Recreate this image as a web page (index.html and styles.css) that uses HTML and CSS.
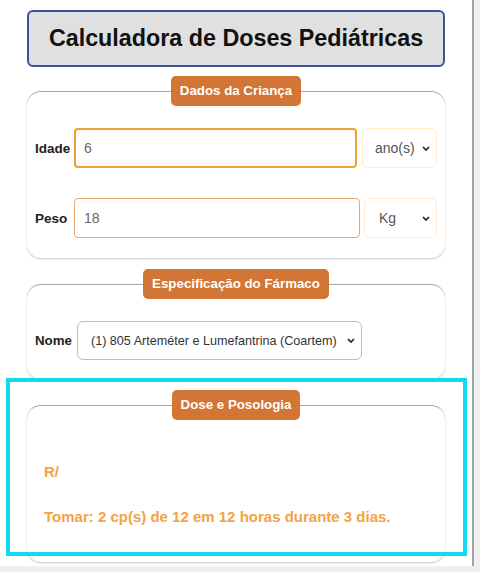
FILE: index.html
```html
<!DOCTYPE html>
<html lang="pt">
<head>
<meta charset="utf-8">
<title>Calculadora de Doses Pediátricas</title>
<link rel="stylesheet" href="styles.css">
</head>
<body>
<div class="page">
  <header class="title-box"><h1>Calculadora de Doses Pediátricas</h1></header>

  <section class="group">
    <div class="group-head"><span class="legend">Dados da Criança</span></div>
    <div class="group-body body-child">
      <div class="row">
        <label class="lbl">Idade</label>
        <input class="field field-focus" type="text" value="6">
        <select class="sel unit unit-age"><option>ano(s)</option></select>
      </div>
      <div class="row">
        <label class="lbl">Peso</label>
        <input class="field" type="text" value="18">
        <select class="sel unit unit-kg"><option>Kg</option></select>
      </div>
    </div>
  </section>

  <section class="group">
    <div class="group-head"><span class="legend">Especificação do Fármaco</span></div>
    <div class="group-body body-drug">
      <div class="row">
        <label class="lbl-auto">Nome</label>
        <select class="sel drug"><option>(1) 805 Arteméter e Lumefantrina (Coartem)</option></select>
      </div>
    </div>
  </section>

  <section class="group">
    <div class="group-head"><span class="legend">Dose e Posologia</span></div>
    <div class="group-body body-dose">
      <p class="rx">R/</p>
      <p class="rx">Tomar: 2 cp(s) de 12 em 12 horas durante 3 dias.</p>
    </div>
  </section>

  <div class="highlight"></div>
</div>
</body>
</html>
```

FILE: styles.css
```css
html, body {
  margin: 0;
  padding: 0;
}
body {
  background: #f0f0f0;
  font-family: "Liberation Sans", Arial, sans-serif;
  width: 480px;
  height: 572px;
  overflow: hidden;
}
.page {
  position: relative;
  box-sizing: border-box;
  width: 474px;
  height: 566px;
  background: #fff;
  border-right: 2px solid #a4a4a4;
  padding: 10px 27px 0 27px;
  overflow: hidden;
}
.title-box {
  box-sizing: border-box;
  height: 57px;
  background: #e0e0e0;
  border: 2px solid #3d4f9f;
  border-radius: 6px;
  display: flex;
  align-items: center;
  justify-content: center;
}
.title-box h1 {
  margin: 0;
  font-size: 23.3px;
  font-weight: bold;
  color: #111;
}
.group {
  margin-top: 9px;
}
.group + .group {
  margin-top: 11px;
}
.group-head {
  display: flex;
  justify-content: center;
  position: relative;
  z-index: 1;
}
.legend {
  display: block;
  box-sizing: border-box;
  height: 30px;
  line-height: 30px;
  padding: 0 9px;
  background: #d37534;
  color: #fff;
  font-weight: bold;
  font-size: 13.3px;
  border-radius: 5px;
}
.group-body {
  margin-top: -15px;
  border-top: 1px solid #a8a8a8;
  border-radius: 14px;
  box-shadow: 0 1px 2px rgba(0, 0, 0, 0.22);
  background: #fff;
}
.body-child {
  padding: 36px 8px 20px 8px;
  display: flex;
  flex-direction: column;
  gap: 30px;
}
.row {
  display: flex;
  align-items: center;
}
.lbl {
  width: 39px;
  font-weight: bold;
  font-size: 13.5px;
  color: #222;
}
.lbl-auto {
  font-weight: bold;
  font-size: 13.3px;
  color: #222;
  margin-right: 5px;
}
.field {
  flex: 1;
  min-width: 0;
  box-sizing: border-box;
  height: 40px;
  border: 1px solid #e6a870;
  border-radius: 4px;
  padding: 0 9px;
  font-family: "Liberation Sans", Arial, sans-serif;
  font-size: 14px;
  color: #666;
  outline: none;
}
.field-focus {
  border: 2px solid #f0a030;
  padding: 0 8px;
}
.sel {
  -webkit-appearance: none;
  appearance: none;
  box-sizing: border-box;
  background-color: #fff;
  background-image: url("data:image/svg+xml,%3Csvg xmlns='http://www.w3.org/2000/svg' width='8' height='5' viewBox='0 0 8 5'%3E%3Cpath d='M1 1L4 4L7 1' fill='none' stroke='%23222' stroke-width='1.7'/%3E%3C/svg%3E");
  background-repeat: no-repeat;
  font-family: "Liberation Sans", Arial, sans-serif;
}
.unit {
  height: 40px;
  border: 1px dotted #fbd4b0;
  border-radius: 6px;
  font-size: 14px;
  color: #555;
  padding: 0 0 0 12px;
  background-position: right 6px center;
}
.unit-age {
  width: 75px;
  margin-left: 5px;
}
.unit-kg {
  width: 73px;
  margin-left: 4px;
  padding-left: 14px;
}
.body-drug {
  padding: 36px 8px 19px 8px;
}
.drug {
  width: 285px;
  height: 39px;
  border: 1px solid #f0b478;
  border-radius: 6px;
  font-size: 12.6px;
  color: #333;
  padding: 0 0 0 13px;
  background-position: right 6px center;
}
.body-dose {
  padding: 57px 17px 37px 17px;
  display: flex;
  flex-direction: column;
  gap: 28px;
}
.rx {
  margin: 0;
  color: #f5a245;
  font-weight: bold;
  font-size: 15px;
  line-height: 17px;
}
.highlight {
  position: absolute;
  left: 6px;
  top: 378px;
  width: 461px;
  height: 178px;
  box-sizing: border-box;
  border: 4px solid #12d8f4;
  pointer-events: none;
}
```
